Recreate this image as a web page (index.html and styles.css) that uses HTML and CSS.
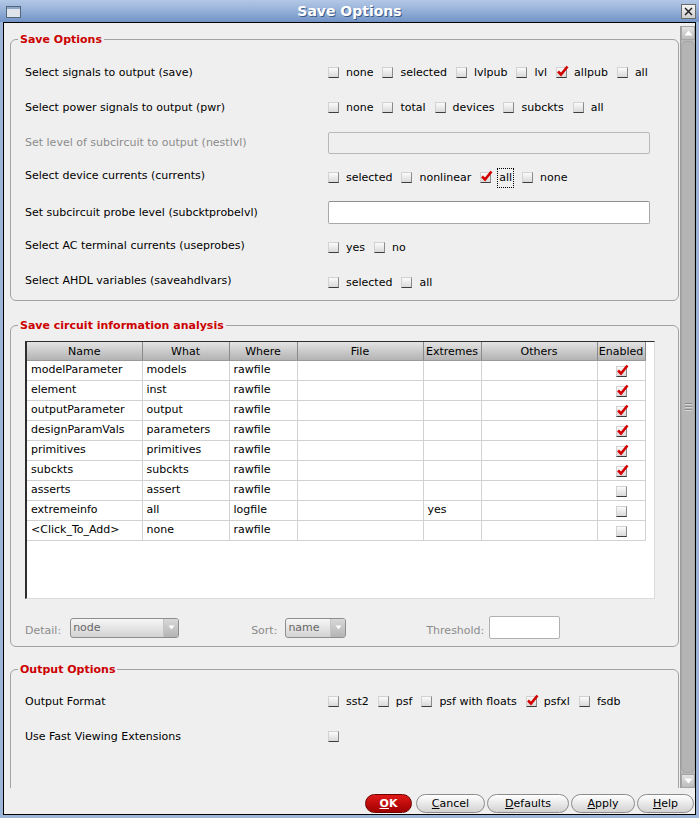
FILE: index.html
```html
<!DOCTYPE html>
<html>
<head>
<meta charset="utf-8">
<link rel="stylesheet" href="styles.css">
</head>
<body>
<div class="window">
  <div class="titlebar">
    <span class="ticon"><svg width="15" height="12" viewBox="0 0 15 12"><rect x="0.5" y="0.5" width="14" height="11" fill="#dfe3ea" stroke="#55657c"/><rect x="1" y="1" width="13" height="2" fill="#8ea7c9"/></svg></span>
    <span class="ttext">Save Options</span>
    <span class="tclose"><svg width="15" height="15" viewBox="0 0 15 15"><path d="M3.5 3.5 L11.5 11.5 M11.5 3.5 L3.5 11.5" stroke="#1e1e1e" stroke-width="1.6"/></svg></span>
  </div>
  <div class="client">
    <div class="main">
      <div class="viewport">
        <fieldset class="group g1">
          <legend>Save Options</legend>
          <div class="gbody rows">
            <div class="lbl">Select signals to output (save)</div>
            <div class="ctl">
              <span class="cbi"><span class="ck"></span>none</span>
              <span class="cbi"><span class="ck"></span>selected</span>
              <span class="cbi"><span class="ck"></span>lvlpub</span>
              <span class="cbi"><span class="ck"></span>lvl</span>
              <span class="cbi"><span class="ck on"><svg class="mark" width="13" height="12" viewBox="0 0 13 12"><path d="M2 6.5 L5 9.5 L11.5 1.5" fill="none" stroke="#d40000" stroke-width="2.6"/></svg></span>allpub</span>
              <span class="cbi"><span class="ck"></span>all</span>
            </div>
            <div class="lbl">Select power signals to output (pwr)</div>
            <div class="ctl">
              <span class="cbi"><span class="ck"></span>none</span>
              <span class="cbi"><span class="ck"></span>total</span>
              <span class="cbi"><span class="ck"></span>devices</span>
              <span class="cbi"><span class="ck"></span>subckts</span>
              <span class="cbi"><span class="ck"></span>all</span>
            </div>
            <div class="lbl dis">Set level of subcircuit to output (nestlvl)</div>
            <div class="ctl"><div class="tin tin-dis"></div></div>
            <div class="lbl hi">Select device currents (currents)</div>
            <div class="ctl">
              <span class="cbi"><span class="ck"></span>selected</span>
              <span class="cbi"><span class="ck"></span>nonlinear</span>
              <span class="cbi"><span class="ck on"><svg class="mark" width="13" height="12" viewBox="0 0 13 12"><path d="M2 6.5 L5 9.5 L11.5 1.5" fill="none" stroke="#d40000" stroke-width="2.6"/></svg></span><span class="focus">all</span></span>
              <span class="cbi"><span class="ck"></span>none</span>
            </div>
            <div class="lbl">Set subcircuit probe level (subcktprobelvl)</div>
            <div class="ctl"><div class="tin"></div></div>
            <div class="lbl hi">Select AC terminal currents (useprobes)</div>
            <div class="ctl">
              <span class="cbi"><span class="ck"></span>yes</span>
              <span class="cbi"><span class="ck"></span>no</span>
            </div>
            <div class="lbl hi">Select AHDL variables (saveahdlvars)</div>
            <div class="ctl">
              <span class="cbi"><span class="ck"></span>selected</span>
              <span class="cbi"><span class="ck"></span>all</span>
            </div>
          </div>
        </fieldset>

        <fieldset class="group g2">
          <legend>Save circuit information analysis</legend>
          <div class="gbody">
            <div class="tblwrap">
              <table class="tbl">
                <colgroup>
                  <col style="width:115px"><col style="width:87px"><col style="width:68px"><col style="width:126px"><col style="width:58px"><col style="width:116px"><col style="width:48px">
                </colgroup>
                <thead>
                  <tr><th>Name</th><th>What</th><th>Where</th><th>File</th><th>Extremes</th><th>Others</th><th>Enabled</th></tr>
                </thead>
                <tbody>
                  <tr><td>modelParameter</td><td>models</td><td>rawfile</td><td></td><td></td><td></td><td class="en"><span class="ck on"><svg class="mark" width="13" height="12" viewBox="0 0 13 12"><path d="M2 6.5 L5 9.5 L11.5 1.5" fill="none" stroke="#d40000" stroke-width="2.6"/></svg></span></td></tr>
                  <tr><td>element</td><td>inst</td><td>rawfile</td><td></td><td></td><td></td><td class="en"><span class="ck on"><svg class="mark" width="13" height="12" viewBox="0 0 13 12"><path d="M2 6.5 L5 9.5 L11.5 1.5" fill="none" stroke="#d40000" stroke-width="2.6"/></svg></span></td></tr>
                  <tr><td>outputParameter</td><td>output</td><td>rawfile</td><td></td><td></td><td></td><td class="en"><span class="ck on"><svg class="mark" width="13" height="12" viewBox="0 0 13 12"><path d="M2 6.5 L5 9.5 L11.5 1.5" fill="none" stroke="#d40000" stroke-width="2.6"/></svg></span></td></tr>
                  <tr><td>designParamVals</td><td>parameters</td><td>rawfile</td><td></td><td></td><td></td><td class="en"><span class="ck on"><svg class="mark" width="13" height="12" viewBox="0 0 13 12"><path d="M2 6.5 L5 9.5 L11.5 1.5" fill="none" stroke="#d40000" stroke-width="2.6"/></svg></span></td></tr>
                  <tr><td>primitives</td><td>primitives</td><td>rawfile</td><td></td><td></td><td></td><td class="en"><span class="ck on"><svg class="mark" width="13" height="12" viewBox="0 0 13 12"><path d="M2 6.5 L5 9.5 L11.5 1.5" fill="none" stroke="#d40000" stroke-width="2.6"/></svg></span></td></tr>
                  <tr><td>subckts</td><td>subckts</td><td>rawfile</td><td></td><td></td><td></td><td class="en"><span class="ck on"><svg class="mark" width="13" height="12" viewBox="0 0 13 12"><path d="M2 6.5 L5 9.5 L11.5 1.5" fill="none" stroke="#d40000" stroke-width="2.6"/></svg></span></td></tr>
                  <tr><td>asserts</td><td>assert</td><td>rawfile</td><td></td><td></td><td></td><td class="en"><span class="ck"></span></td></tr>
                  <tr><td>extremeinfo</td><td>all</td><td>logfile</td><td></td><td>yes</td><td></td><td class="en"><span class="ck"></span></td></tr>
                  <tr><td>&lt;Click_To_Add&gt;</td><td>none</td><td>rawfile</td><td></td><td></td><td></td><td class="en"><span class="ck"></span></td></tr>
                </tbody>
              </table>
            </div>
            <div class="detail">
              <span class="dlbl">Detail:</span>
              <span class="combo c-detail"><span class="cval">node</span><span class="carr"><svg width="7" height="5" viewBox="0 0 7 5"><path d="M0.5 0.5 L6.5 0.5 L3.5 4.5 Z" fill="#ffffff"/></svg></span></span>
              <span class="dlbl l-sort">Sort:</span>
              <span class="combo c-sort"><span class="cval">name</span><span class="carr"><svg width="7" height="5" viewBox="0 0 7 5"><path d="M0.5 0.5 L6.5 0.5 L3.5 4.5 Z" fill="#ffffff"/></svg></span></span>
              <span class="dlbl l-thr">Threshold:</span>
              <span class="thr"></span>
            </div>
          </div>
        </fieldset>

        <fieldset class="group g3">
          <legend>Output Options</legend>
          <div class="gbody rows">
            <div class="lbl">Output Format</div>
            <div class="ctl">
              <span class="cbi"><span class="ck"></span>sst2</span>
              <span class="cbi"><span class="ck"></span>psf</span>
              <span class="cbi"><span class="ck"></span>psf with floats</span>
              <span class="cbi"><span class="ck on"><svg class="mark" width="13" height="12" viewBox="0 0 13 12"><path d="M2 6.5 L5 9.5 L11.5 1.5" fill="none" stroke="#d40000" stroke-width="2.6"/></svg></span>psfxl</span>
              <span class="cbi"><span class="ck"></span>fsdb</span>
            </div>
            <div class="lbl">Use Fast Viewing Extensions</div>
            <div class="ctl"><span class="cbi"><span class="ck"></span></span></div>
          </div>
        </fieldset>
      </div>
      <div class="sb">
        <div class="sb-btn"><svg width="9" height="6" viewBox="0 0 9 6"><path d="M4.5 0.5 L8.5 5.5 L0.5 5.5 Z" fill="#ffffff"/></svg></div>
        <div class="sb-track">
          <div class="sb-thumb"><span class="grip"></span></div>
        </div>
        <div class="sb-btn"><svg width="9" height="6" viewBox="0 0 9 6"><path d="M0.5 0.5 L8.5 0.5 L4.5 5.5 Z" fill="#ffffff"/></svg></div>
      </div>
    </div>
    <div class="buttons">
      <span class="btn ok"><u>O</u>K</span>
      <span class="btn b-cancel"><u>C</u>ancel</span>
      <span class="btn b-def"><u>D</u>efaults</span>
      <span class="btn b-apply"><u>A</u>pply</span>
      <span class="btn b-help"><u>H</u>elp</span>
    </div>
  </div>
</div>
</body>
</html>
```

FILE: styles.css
```css
* { box-sizing: border-box; }
html, body { margin: 0; padding: 0; }
body {
  width: 699px;
  height: 818px;
  overflow: hidden;
  font-family: "DejaVu Sans", sans-serif;
  font-size: 11px;
  color: #000;
  background: #9cb4d8;
}
.window {
  width: 699px;
  height: 818px;
  display: flex;
  flex-direction: column;
  background: #9db5d9;
}
.titlebar {
  height: 22px;
  flex: none;
  display: grid;
  grid-template-columns: 1fr auto 1fr;
  align-items: center;
  background: linear-gradient(#b3c8e6 0%, #94afd7 50%, #7394c6 100%);
}
.ticon { justify-self: start; margin-left: 6px; margin-top: 1px; display: flex; }
.ttext {
  color: #fff;
  font-weight: bold;
  font-size: 14px;
  line-height: 16px;
  text-shadow: 1px 1px 0 #3c5a88;
}
.tclose {
  justify-self: end;
  margin-right: 3px;
  width: 15px;
  height: 15px;
  display: flex;
  background: linear-gradient(#f4f4f4, #cfcfcf);
  border: 1px solid #6b6b6b;
  align-items: center;
  justify-content: center;
}
.tclose svg { display: block; }
.client {
  flex: 1;
  margin: 0 3px 3px 3px;
  border: 1px solid #000;
  background: #efefef;
  display: flex;
  flex-direction: column;
  min-height: 0;
}
.main {
  flex: 1;
  display: flex;
  min-height: 0;
}
.viewport {
  width: 676px;
  flex: none;
  overflow: hidden;
  padding: 0 1px 0 6px;
}
.group {
  margin: 0;
  padding: 0;
  border: 1px solid #a2a2a2;
  border-radius: 6px;
  min-width: 0;
}
.group legend {
  margin-left: 7px;
  padding: 0 2px;
  font-weight: bold;
  font-size: 11px;
  line-height: 13px;
  color: #cc0000;
}
.g1 { margin-top: 10px; }
.g1 .gbody { padding: 9px 0 0 14px; }
.g2 { margin-top: 18px; }
.g2 .gbody { padding: 9px 0 7px 14px; }
.g3 { margin-top: 16px; }
.g3 .gbody { padding: 8px 0 60px 14px; }

.rows {
  display: grid;
  grid-template-columns: 303px 322px;
  grid-auto-rows: 35px;
  align-items: center;
}
.lbl { white-space: nowrap; line-height: 13px; }
.lbl.hi { margin-bottom: 5px; }
.lbl.dis { color: #8c8c8c; }
.ctl { display: flex; align-items: center; white-space: nowrap; }
.cbi { display: inline-flex; align-items: center; margin-right: 9px; line-height: 13px; }
.ck {
  position: relative;
  display: inline-block;
  width: 11px;
  height: 11px;
  margin-right: 7px;
  border: 1px solid;
  border-color: #d2d2d2 #8a8a8a #3c3c3c #d2d2d2;
  background: linear-gradient(#fbfbfb, #d9d9d9);
  flex: none;
}
.ck .mark { position: absolute; left: -1px; top: -3px; }
.focus { outline: 1px dotted #000; outline-offset: 0; padding: 2px 1px 3px 1px; }

.tin {
  width: 322px;
  height: 23px;
  border: 1px solid #a8a8a8;
  border-top-color: #8e8e8e;
  border-radius: 2px;
  background: #fff;
}
.tin.tin-dis { background: #efefef; border-color: #b8b8b8; height: 22px; }

.tblwrap {
  width: 630px;
  height: 258px;
  border: 1px solid;
  border-color: #2e2e2e #dcdcdc #dcdcdc #2e2e2e;
  border-left-width: 2px;
  background: #fff;
  overflow: hidden;
}
.tbl {
  border-collapse: collapse;
  table-layout: fixed;
  width: 618px;
}
.tbl th {
  height: 18px;
  padding: 0;
  font-weight: normal;
  text-align: center;
  background: linear-gradient(#e3e3e3, #b3b3b3);
  border-right: 1px solid #8a8a8a;
  border-bottom: 1px solid #9a9a9a;
  white-space: nowrap;
  overflow: hidden;
  line-height: 13px;
  padding-top: 1px;
}
.tbl td {
  height: 20px;
  padding: 0 0 0 4px;
  border-right: 1px solid #d2d2d2;
  border-bottom: 1px solid #d2d2d2;
  white-space: nowrap;
  overflow: hidden;
  line-height: 13px;
  padding-bottom: 1px;
}
.tbl td.en { padding: 0; text-align: center; }
.tbl td.en .ck { margin: 3px 0 0 0; vertical-align: top; }

.detail {
  display: flex;
  align-items: center;
  height: 23px;
  margin-top: 17px;
}
.dlbl { color: #8c8c8c; margin-top: 6px; }
.combo {
  display: flex;
  height: 20px;
  margin-left: 9px;
  border: 1px solid #8e8e8e;
  border-radius: 3px;
  background: linear-gradient(#f6f6f6, #d3d3d3);
  color: #666;
  overflow: hidden;
}
.c-detail { width: 109px; }
.c-sort { width: 61px; margin-left: 8px; }
.l-sort { margin-left: 72px; }
.l-thr { margin-left: 80px; }
.cval { flex: 1; padding-left: 2px; line-height: 18px; }
.carr {
  width: 15px;
  display: flex;
  align-items: center;
  justify-content: center;
  background: linear-gradient(#d8d8d8, #b4b4b4);
  border-left: 1px solid #c4c4c4;
}
.thr {
  width: 71px;
  height: 23px;
  margin-left: 5px;
  border: 1px solid #b0b0b0;
  border-radius: 2px;
  background: #fff;
}

.sb {
  width: 15px;
  flex: none;
  margin-top: 3px;
  display: flex;
  flex-direction: column;
  background: #b6b6b6;
  border-left: 1px solid #9c9c9c;
}
.sb-btn {
  height: 14px;
  flex: none;
  display: flex;
  align-items: center;
  justify-content: center;
  background: linear-gradient(#e2e2e2, #bcbcbc);
  border: 1px solid #a4a4a4;
}
.sb-track { flex: 1; display: flex; padding: 1px 0; }
.sb-thumb {
  flex: 1;
  border-radius: 6px;
  background: #b4b4b4;
  border: 1px solid #a6a6a6;
  display: flex;
  align-items: center;
  justify-content: center;
}
.grip {
  width: 7px;
  height: 9px;
  background: repeating-linear-gradient(#8a8a8a 0 1px, #d6d6d6 1px 2px, transparent 2px 3px);
}

.buttons {
  height: 26px;
  flex: none;
  display: flex;
  justify-content: flex-end;
  align-items: flex-start;
  padding: 6px 1px 0 0;
  gap: 2px;
}
.btn {
  height: 19px;
  border-radius: 10px;
  border: 1px solid #8c8c8c;
  background: linear-gradient(#ffffff, #d2d2d2);
  display: flex;
  align-items: center;
  justify-content: center;
  line-height: 13px;
}
.btn.ok {
  width: 47px;
  margin-right: 2px;
  background: linear-gradient(#e01818, #a00000);
  border-color: #6e0000;
  color: #fff;
  font-weight: bold;
}
.b-cancel { width: 69px; }
.b-def { width: 82px; }
.b-apply { width: 64px; }
.b-help { width: 57px; }
```
